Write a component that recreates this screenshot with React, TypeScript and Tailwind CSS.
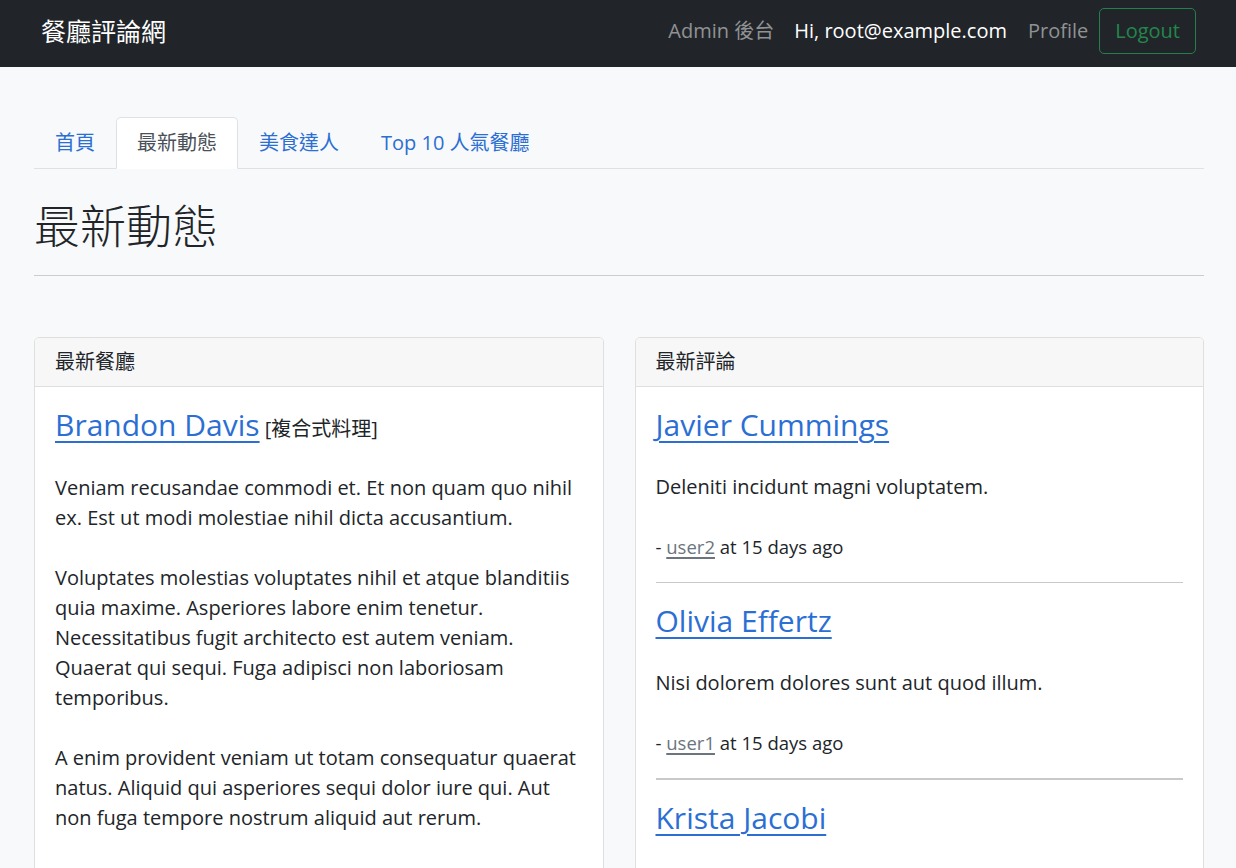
import React from "react";

const comments = [
  { name: "Javier Cummings", text: "Deleniti incidunt magni voluptatem.", user: "user2", hr: "h-px" },
  { name: "Olivia Effertz", text: "Nisi dolorem dolores sunt aut quod illum.", user: "user1", hr: "h-[2px]" },
  { name: "Krista Jacobi", text: "Quia ut aspernatur rerum.", user: "user3", hr: "h-px" },
];

export default function App() {
  return (
    <div className="min-h-screen bg-[#f8f9fa] text-[#212529] text-[20px] leading-[30px] font-['Open_Sans','Noto_Sans_CJK_TC',sans-serif]">
      {/* Navbar */}
      <nav className="h-[67px] bg-[#212529] flex items-center justify-between pl-[41px] pr-[40px] pb-[6px]">
        <a className="text-white text-[25px] leading-[36px]">餐廳評論網</a>
        <div className="flex items-center">
          <a className="px-[10px] text-[#909294]">Admin 後台</a>
          <span className="pl-[10px] pr-[11px] text-white">Hi, root@example.com</span>
          <a className="px-[10px] text-[#909294]">Profile</a>
          <button className="ml-px border border-[#23804a] text-[#23874c] rounded-[5px] px-[15px] py-[7px] leading-[30px]">
            Logout
          </button>
        </div>
      </nav>

      <main className="w-[1170px] ml-[34px] pt-[50px]">
        {/* Tabs */}
        <ul className="flex border-b border-[#dee2e6]">
          <li className="-mb-px">
            <a className="block px-[20px] py-[10px] border border-transparent text-[#2b6fd4]">首頁</a>
          </li>
          <li className="-mb-px">
            <a className="block px-[20px] py-[10px] border border-[#dee2e6] border-b-white bg-white rounded-t-[5px] text-[#495057]">
              最新動態
            </a>
          </li>
          <li className="-mb-px">
            <a className="block px-[20px] py-[10px] border border-transparent text-[#2b6fd4]">美食達人</a>
          </li>
          <li className="-mb-px">
            <a className="block px-[20px] py-[10px] border border-transparent text-[#2b6fd4]">Top 10 人氣餐廳</a>
          </li>
        </ul>

        <h1 className="mt-[29px] text-[46px] leading-[55px] font-light">最新動態</h1>
        <div className="mt-[22px] h-px bg-[#cbcccd]" />

        <div className="mt-[61px] grid grid-cols-2 gap-[31px] items-start">
          {/* Left card */}
          <div className="bg-white border border-[#dfdfdf] rounded-[5px] overflow-hidden">
            <div className="bg-[#f7f7f7] border-b border-[#dfdfdf] px-[20px] py-[9px]">最新餐廳</div>
            <div className="p-[20px]">
              <div className="mb-[26px] leading-[36px]">
                <a className="text-[30px] text-[#2b6fd4] underline underline-offset-[5px] decoration-[1.5px]">Brandon Davis</a>{" "}
                <span className="text-[20px]">[複合式料理]</span>
              </div>
              <p className="mb-[30px]">
                Veniam recusandae commodi et. Et non quam quo nihil ex. Est ut modi molestiae nihil dicta accusantium.
              </p>
              <p className="mb-[30px]">
                Voluptates molestias voluptates nihil et atque blanditiis quia maxime. Asperiores labore enim tenetur.
                Necessitatibus fugit architecto est autem veniam. Quaerat qui sequi. Fuga adipisci non laboriosam
                temporibus.
              </p>
              <p className="mb-[30px]">
                A enim provident veniam ut totam consequatur quaerat natus. Aliquid qui asperiores sequi dolor iure
                qui. Aut non fuga tempore nostrum aliquid aut rerum.
              </p>
              <p>Quibusdam et vel. Sint voluptas ipsum. Aut est molestias et.</p>
            </div>
          </div>

          {/* Right card */}
          <div className="bg-white border border-[#dfdfdf] rounded-[5px] overflow-hidden">
            <div className="bg-[#f7f7f7] border-b border-[#dfdfdf] px-[20px] py-[9px]">最新評論</div>
            <div className="p-[20px]">
              {comments.map((c) => (
                <div key={c.name}>
                  <a className="block w-fit text-[30px] leading-[36px] mb-[29px] text-[#2b6fd4] underline underline-offset-[5px] decoration-[1.5px]">
                    {c.name}
                  </a>
                  <p className="mb-[30px]">{c.text}</p>
                  <div className="text-[18.5px] leading-[30px]">
                    - <a className="text-[#6c757d] underline decoration-[1.5px] underline-offset-[3px]">{c.user}</a> at 15 days ago
                  </div>
                  <div className={`my-[20px] ${c.hr} bg-[#c9c9c9]`} />
                </div>
              ))}
            </div>
          </div>
        </div>
      </main>
    </div>
  );
}
